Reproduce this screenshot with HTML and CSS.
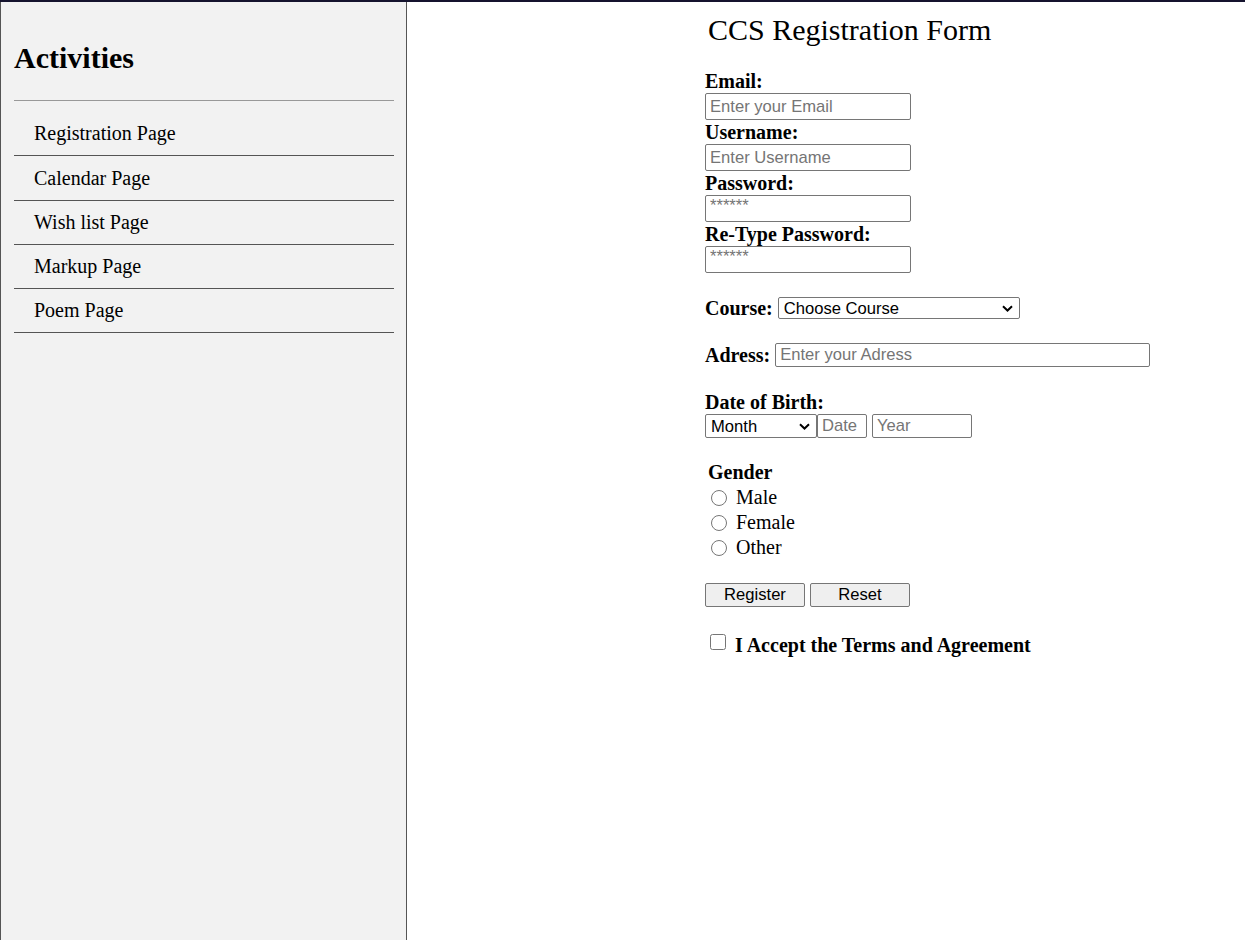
FILE: index.html
```html
<!DOCTYPE html>
<html>
<head>
<meta charset="utf-8">
<link rel="stylesheet" href="styles.css">
</head>
<body>
<div class="page">
  <aside class="sidebar">
    <h2 class="side-title">Activities</h2>
    <hr class="side-rule">
    <ul class="nav">
      <li><a href="#">Registration Page</a></li>
      <li><a href="#">Calendar Page</a></li>
      <li><a href="#">Wish list Page</a></li>
      <li><a href="#">Markup Page</a></li>
      <li><a href="#">Poem Page</a></li>
    </ul>
  </aside>
  <main class="main">
    <form class="form">
      <h1 class="form-title">CCS Registration Form</h1>
      <div class="stack">
        <label class="lbl">Email:</label>
        <input class="field" type="text" placeholder="Enter your Email">
        <label class="lbl">Username:</label>
        <input class="field" type="text" placeholder="Enter Username">
        <label class="lbl">Password:</label>
        <input class="field pw" type="password" placeholder="******">
        <label class="lbl">Re-Type Password:</label>
        <input class="field pw" type="password" placeholder="******">
      </div>
      <div class="row course-row">
        <label class="lbl">Course:</label>
        <select class="course"><option>Choose Course</option></select>
      </div>
      <div class="row addr-row">
        <label class="lbl">Adress:</label>
        <input class="addr" type="text" placeholder="Enter your Adress">
      </div>
      <div class="dob">
        <label class="lbl">Date of Birth:</label>
        <div class="dob-row">
          <select class="month"><option>Month</option></select><input class="date" type="text" placeholder="Date"><input class="year" type="text" placeholder="Year">
        </div>
      </div>
      <div class="gender">
        <div class="lbl">Gender</div>
        <label class="opt"><input type="radio" name="g"><span>Male</span></label>
        <label class="opt"><input type="radio" name="g"><span>Female</span></label>
        <label class="opt"><input type="radio" name="g"><span>Other</span></label>
      </div>
      <div class="buttons">
        <button type="button" class="btn">Register</button>
        <button type="reset" class="btn">Reset</button>
      </div>
      <label class="accept"><input type="checkbox"><span>I Accept the Terms and Agreement</span></label>
    </form>
  </main>
</div>
</body>
</html>
```
FILE: styles.css
```css
html, body {
  margin: 0;
  padding: 0;
  height: 100%;
}
body {
  font-family: "Liberation Serif", "Times New Roman", serif;
  color: #000;
  background: #fff;
  border-top: 2px solid #15132e;
  box-sizing: border-box;
}
.page {
  display: flex;
  height: 938px;
}
.sidebar {
  flex: none;
  width: 407px;
  background: #f2f2f2;
  border-left: 1px solid #555;
  border-right: 1px solid #555;
  padding: 0 12px 0 13px;
  box-sizing: border-box;
}
.side-title {
  font-size: 30px;
  font-weight: bold;
  margin: 39px 0 25px 0;
  line-height: 34px;
}
.side-rule {
  border: none;
  border-top: 1px solid #999;
  margin: 0;
}
.nav {
  list-style: none;
  margin: 0;
  padding: 0;
}
.nav li {
  border-bottom: 1px solid #555;
  height: 44px;
  box-sizing: border-box;
  display: flex;
  align-items: center;
  padding-left: 20px;
}
.nav li:first-child {
  height: 55px;
  padding-top: 10px;
}
.nav li:nth-child(2) {
  height: 45px;
}
.nav a {
  color: #000;
  text-decoration: none;
  font-size: 20px;
  line-height: 23px;
}
.main {
  flex: 1;
  padding-left: 298px;
}
.form {
  display: flex;
  flex-direction: column;
  align-items: flex-start;
}
.form-title {
  font-size: 30px;
  font-weight: normal;
  margin: 11px 0 0 3px;
  line-height: 34px;
}
.lbl {
  font-weight: bold;
  font-size: 20px;
  line-height: 24px;
}
.stack {
  display: flex;
  flex-direction: column;
  align-items: flex-start;
  margin-top: 22px;
}
.stack .lbl {
  display: block;
  height: 24px;
}
input, select, button {
  font-family: "Liberation Sans", Arial, sans-serif;
  font-size: 16.6px;
  box-sizing: border-box;
  border: 1px solid #767676;
  border-radius: 2px;
  margin: 0;
  color: #000;
}
input[type="text"], input[type="password"] {
  padding: 1px 4px;
  background: #fff;
}
input::placeholder {
  color: #757575;
}
.field {
  width: 206px;
  height: 27px;
}
.pw {
  padding-top: 0 !important;
  padding-bottom: 6px !important;
}
select {
  appearance: none;
  -webkit-appearance: none;
  background-color: #fff;
  background-image: url("data:image/svg+xml,%3Csvg xmlns='http://www.w3.org/2000/svg' width='11' height='7' viewBox='0 0 11 7'%3E%3Cpath d='M1 1.2 L5.5 5.5 L10 1.2' fill='none' stroke='%23000' stroke-width='2'/%3E%3C/svg%3E");
  background-repeat: no-repeat;
  background-position: right 6px center;
  padding: 0 20px 0 5px;
}
.row {
  display: flex;
  align-items: center;
  gap: 5px;
}
.course-row {
  margin-top: 23px;
}
.course {
  width: 242px;
  height: 22px;
}
.addr-row {
  margin-top: 23px;
}
.addr {
  width: 375px;
  height: 24px;
}
.dob {
  margin-top: 23px;
  display: flex;
  flex-direction: column;
  align-items: flex-start;
}
.dob-row {
  display: flex;
}
.month {
  width: 112px;
  height: 24px;
}
.date {
  width: 50px;
  height: 24px;
}
.year {
  width: 100px;
  height: 24px;
  margin-left: 5px;
}
.gender {
  margin-top: 22px;
  padding-left: 3px;
  display: flex;
  flex-direction: column;
  align-items: flex-start;
}
.gender .lbl {
  margin-bottom: 1px;
}
.opt {
  display: flex;
  align-items: center;
  font-size: 20px;
  height: 25px;
}
.opt input {
  margin: 0 9px 0 3px;
  width: 16px;
  height: 16px;
}
.buttons {
  margin-top: 23px;
  display: flex;
  gap: 5px;
}
.btn {
  width: 100px;
  height: 24px;
  background: #efefef;
  padding: 0;
}
.accept {
  margin-top: 23px;
  height: 24px;
  display: flex;
  align-items: center;
  font-weight: bold;
  font-size: 20px;
}
.accept input {
  margin: 0 9px 0 5px;
  width: 16px;
  height: 16px;
}
.accept span {
  padding-top: 6px;
}
```
